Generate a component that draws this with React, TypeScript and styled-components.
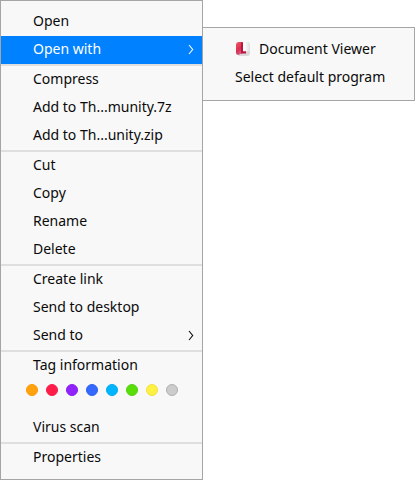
import React from "react";
import styled, { createGlobalStyle } from "styled-components";

const GlobalStyle = createGlobalStyle`
  * { box-sizing: border-box; }
  body { margin: 0; background: #fff; font: 14px/26px "Noto Sans", sans-serif; color: #0a0a0a; }
`;

const Stage = styled.main`
  display: flex;
  align-items: flex-start;
  width: 415px;
  height: 480px;
  overflow: hidden;
`;

const Menu = styled.div`
  display: flex;
  flex-direction: column;
  width: 203px;
  height: 480px;
  padding: 7px 0 0;
  background: #f8f8f8;
  border: 1px solid #a5a5a5;
`;

const Submenu = styled.div`
  width: 213px;
  height: 74px;
  margin: 27px 0 0 -1px;
  padding: 7px 0;
  background: #f8f8f8;
  border: 1px solid #a5a5a5;
`;

const Item = styled.div<{ $active?: boolean }>`
  display: flex;
  align-items: center;
  flex: none;
  height: 28px;
  padding: 0 8px 2px 32px;
  white-space: nowrap;
  background: ${(p) => (p.$active ? "#0081ff" : "transparent")};
  color: ${(p) => (p.$active ? "#fff" : "inherit")};
`;

const SubmenuItem = styled(Item)`
  padding-bottom: 0;
`;

const Separator = styled.div`
  flex: none;
  height: 2px;
  background: #dfdfdf;
`;

const Arrow = styled.svg`
  width: 6px;
  height: 12px;
  margin-left: auto;
  fill: none;
  stroke: currentColor;
  stroke-width: 1.1;
`;

const ViewerIcon = styled.svg`
  width: 16px;
  height: 16px;
  margin-right: 8px;
`;

const Tags = styled.div`
  display: flex;
  flex: none;
  gap: 8px;
  height: 34px;
  padding: 4px 0 0 25px;
`;

const Tag = styled.span<{ $fill: string; $edge: string }>`
  width: 12px;
  height: 12px;
  border-radius: 50%;
  background: ${(p) => p.$fill};
  border: 1px solid ${(p) => p.$edge};
`;

const tags = [
  ["#ffa20d", "#fa9a08"], ["#ff1c49", "#f51c49"], ["#9023fc", "#861cf0"], ["#3468ff", "#2c60ef"],
  ["#00b5ff", "#00abef"], ["#58df0a", "#55d00e"], ["#fef144", "#f3e23c"], ["#cccccc", "#b0b0b0"],
];

const Chevron = () => (
  <Arrow viewBox="0 0 6 12"><path d="M1 2 4.7 6.5 1 11" /></Arrow>
);

export default function App() {
  return (
    <>
      <GlobalStyle />
      <Stage>
        <Menu>
          <Item>Open</Item>
          <Item $active>Open with<Chevron /></Item>
          <Separator />
          <Item>Compress</Item>
          <Item>Add to Th...munity.7z</Item>
          <Item>Add to Th...unity.zip</Item>
          <Separator />
          <Item>Cut</Item>
          <Item>Copy</Item>
          <Item>Rename</Item>
          <Item>Delete</Item>
          <Separator />
          <Item>Create link</Item>
          <Item>Send to desktop</Item>
          <Item>Send to<Chevron /></Item>
          <Separator />
          <Item>Tag information</Item>
          <Tags>{tags.map(([fill, edge]) => <Tag key={fill} $fill={fill} $edge={edge} />)}</Tags>
          <Item>Virus scan</Item>
          <Separator />
          <Item>Properties</Item>
        </Menu>
        <Submenu>
          <SubmenuItem>
            <ViewerIcon viewBox="0 0 16 16">
              <defs>
                <linearGradient id="cover" x1="0" y1="0" x2="0.4" y2="1">
                  <stop offset="0" stopColor="#ef5866" />
                  <stop offset="0.65" stopColor="#d92f50" />
                  <stop offset="1" stopColor="#d05f80" />
                </linearGradient>
                <linearGradient id="page" x1="0" y1="0" x2="1" y2="0">
                  <stop offset="0.6" stopColor="#ffffff" />
                  <stop offset="1" stopColor="#dfdddd" />
                </linearGradient>
              </defs>
              <rect x="1" y="1" width="14" height="14" rx="3" fill="url(#page)" />
              <path d="M4 1h3.5v13H3.5A2.5 2.5 0 0 1 1 11.5V4a3 3 0 0 1 3-3Z" fill="url(#cover)" />
              <path d="M6 1.3H8V10.3H11V12.8H6Z" fill="#bd1542" />
              <path d="M11 10.3h3.7V12a3 3 0 0 1-3 3H3.5v-1L6 12.8h5Z" fill="#dcd7d9" />
            </ViewerIcon>
            Document Viewer
          </SubmenuItem>
          <SubmenuItem>Select default program</SubmenuItem>
        </Submenu>
      </Stage>
    </>
  );
}
